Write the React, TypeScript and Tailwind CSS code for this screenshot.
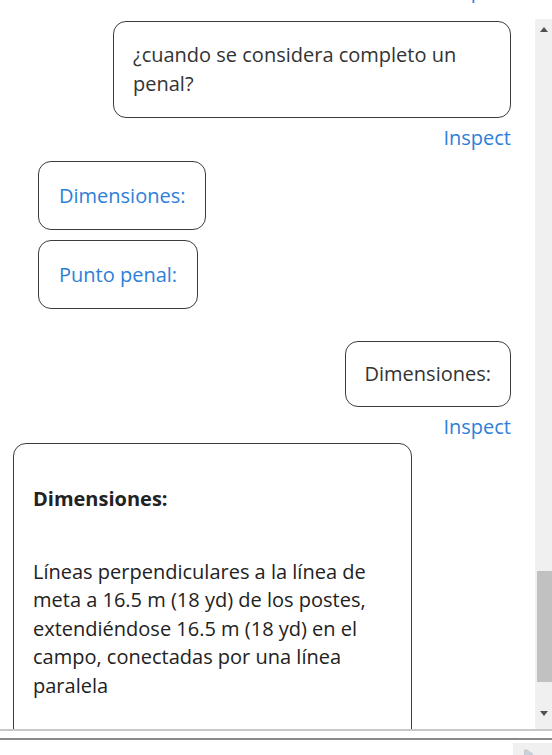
import { Play } from "lucide-react";

const font = { fontFamily: '"Open Sans", "Noto Sans", sans-serif' };

function Inspect({ className = "" }: { className?: string }) {
  return (
    <div className={`flex justify-end pr-[24px] ${className}`}>
      <span className="text-[20px] leading-[28px] text-[#2d7fd8]">Inspect</span>
    </div>
  );
}

function UserBubble({ children, className = "" }: { children: React.ReactNode; className?: string }) {
  return (
    <div className={`flex justify-end pr-[24px] ${className}`}>
      {children}
    </div>
  );
}

function ScrollBar() {
  return (
    <div className="mt-[19px] flex w-[17px] flex-col items-center bg-[#f0f0f0]">
      <div className="mt-[8px] h-0 w-0 border-x-[4px] border-b-[5px] border-x-transparent border-b-[#505050]" />
      <div className="mt-[539px] ml-[2px] h-[111px] w-[15px] bg-[#c1c1c1]" />
      <div className="mt-[29px] h-0 w-0 border-x-[4px] border-t-[5px] border-x-transparent border-t-[#505050]" />
    </div>
  );
}

export default function App() {
  return (
    <div className="h-[755px] w-[552px] overflow-hidden bg-white text-[#333333]" style={font}>
      <div className="flex h-[729px]">
        <div className="flex-1 overflow-hidden">
          <div className="-mt-[23px] flex flex-col">
            <Inspect />

            <UserBubble className="mt-[16px]">
              <div className="w-[398px] rounded-[13px] border-[1.5px] border-[#3c3c3c] px-[19px] py-[19px] text-[20px] leading-[28.5px]">
                ¿cuando se considera completo un penal?
              </div>
            </UserBubble>

            <Inspect className="mt-[6px]" />

            <div className="mt-[9px] flex flex-col items-start gap-[10px] pl-[38px]">
              <div className="rounded-[13px] border-[1.5px] border-[#3c3c3c] px-[20px] py-[19.5px] text-[20px] leading-[28px] text-[#2d7fd8]">
                Dimensiones:
              </div>
              <div className="rounded-[13px] border-[1.5px] border-[#3c3c3c] px-[20px] py-[19.5px] text-[20px] leading-[28px] text-[#2d7fd8]">
                Punto penal:
              </div>
            </div>

            <UserBubble className="mt-[32px]">
              <div className="rounded-[13px] border-[1.5px] border-[#3c3c3c] px-[19px] py-[18px] text-[20px] leading-[28px]">
                Dimensiones:
              </div>
            </UserBubble>

            <Inspect className="mt-[6px]" />

            <div className="mt-[2px] pl-[13px]">
              <div className="h-[300px] w-[399px] rounded-t-[13px] border-[1.5px] border-[#3c3c3c] px-[19px] pt-[41px] text-[20px] leading-[28.5px] text-[#222]">
                <p className="font-bold">Dimensiones:</p>
                <p className="mt-[44px]">
                  Líneas perpendiculares a la línea de meta a 16.5 m (18 yd) de los postes, extendiéndose 16.5 m (18 yd) en el campo, conectadas por una línea paralela
                </p>
              </div>
            </div>
          </div>
        </div>
        <ScrollBar />
      </div>

      <div className="h-[2px] bg-[#c8c8c8]" />
      <div className="mt-[7px] h-[2px] bg-[#8a8a8a]" />
      <div className="flex justify-end pt-[3px]">
        <div className="flex h-[20px] w-[39px] items-start justify-start bg-[#f0f0f0] pl-[9px] pt-[5px]">
          <Play size={12} className="text-[#a8b4c0]" fill="#c8d0d8" strokeWidth={1} />
        </div>
      </div>
    </div>
  );
}
